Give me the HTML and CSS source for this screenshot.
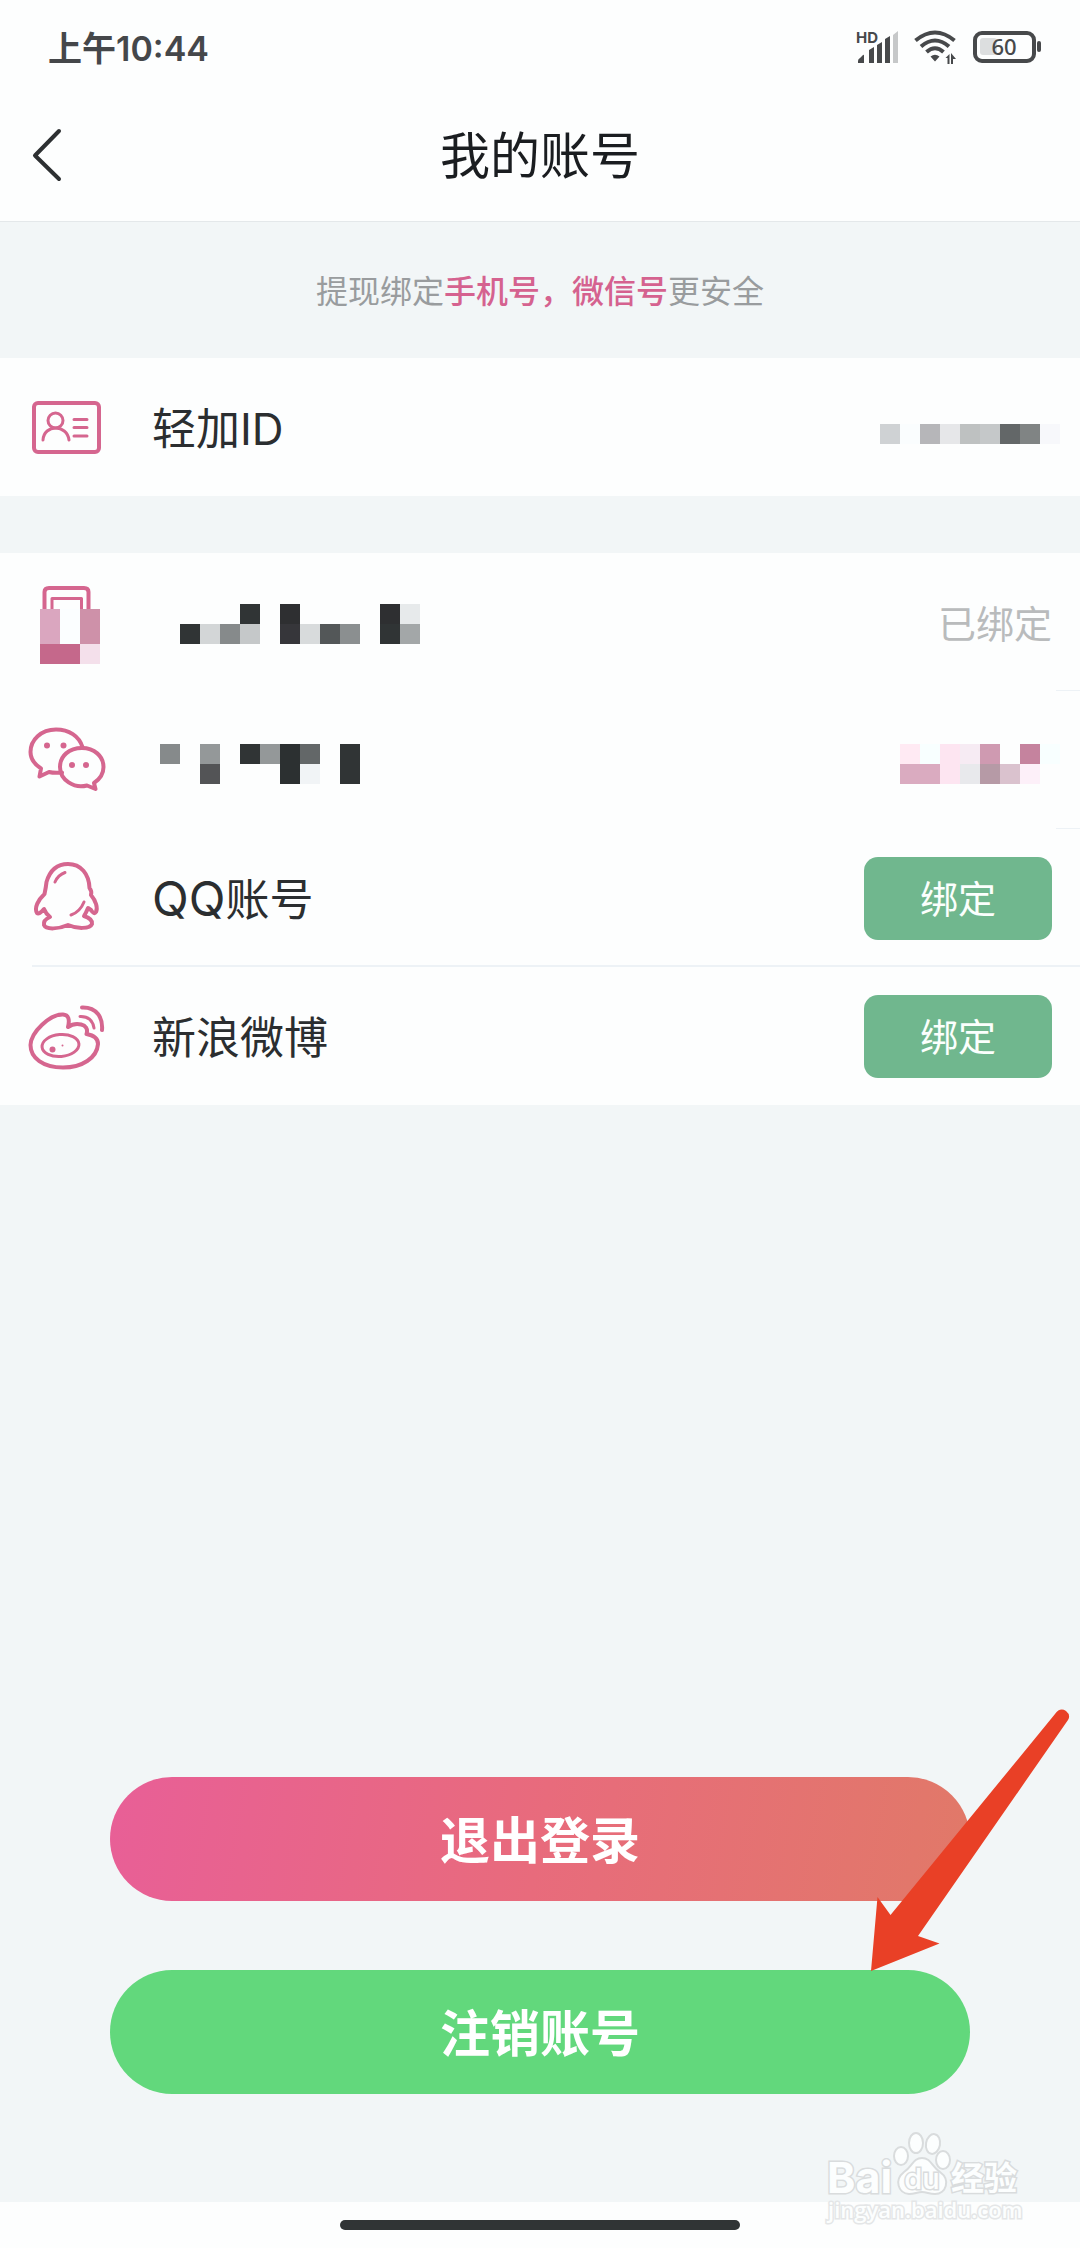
FILE: index.html
```html
<!DOCTYPE html>
<html lang="zh-CN">
<head>
<meta charset="utf-8">
<meta name="viewport" content="width=device-width, initial-scale=1">
<title>我的账号</title>
<link rel="stylesheet" href="styles.css">
</head>
<body>
<div class="status">
  <span class="time">上午10:44</span>
  <div class="status-icons">
    <svg class="signal" width="42" height="32" viewBox="0 0 42 32" aria-hidden="true">
      <text class="hd" x="0" y="12">HD</text>
      <path d="M2 32v-2q0-2 2-3l3-3q1-1 1 1v7zM13 32V19l5-3v16zM21 32V14l5-3v21zM29 32V8l5-3v27z"/>
      <path class="dim" d="M37 32V4l5-4v32z"/>
    </svg>
    <svg class="wifi" width="43" height="34" viewBox="0 0 43 34" aria-hidden="true">
      <g class="wifi-arcs">
        <path d="M1.500 10.500Q21 -5.500 40.500 10.500"/>
        <path d="M7 16.500Q21 4.500 35 16.500"/>
        <path d="M12.500 22Q21 14.500 29.500 22"/>
      </g>
      <path d="M16.500 26.500Q21 23 25.500 26.500L21 31.500zM31.500 28l4-4v10h-2v-6zM37 23l5 6h-3v5h-2z"/>
    </svg>
    <svg class="battery" width="68" height="32" viewBox="0 0 68 32" aria-hidden="true">
      <rect class="shell" x="2" y="2" width="59" height="28" rx="7"/>
      <rect class="level" x="7" y="7" width="17" height="17" rx="3"/>
      <rect x="64" y="10" width="4" height="11" rx="2"/>
      <text class="percent" x="31" y="24" text-anchor="middle">60</text>
    </svg>
  </div>
</div>

<header class="nav">
  <button class="back" type="button" aria-label="返回">
    <svg width="30" height="54" viewBox="0 0 30 54" aria-hidden="true"><path d="M27 3L3 27.500L27 51"/></svg>
  </button>
  <h1 class="title">我的账号</h1>
</header>

<main class="page">
  <p class="tip">提现绑定<em>手机号，微信号</em>更安全</p>

  <ul class="group">
    <li class="row">
      <svg class="icon" width="112" height="96" viewBox="0 0 112 96" aria-hidden="true">
        <rect class="thick" x="34" y="24" width="65" height="49" rx="4"/>
        <circle cx="55.500" cy="41.500" r="7.500"/>
        <path d="M43 61C44 45 67 45 69 61M74 40.500H87M74 48.500H87M74 57H87"/>
      </svg>
      <span class="label">轻加ID</span>
      <svg class="mask" width="172" height="34" viewBox="0 0 172 34" aria-hidden="true">
        <path fill="#cfd2d4" d="M0 14h20v20H0z"/><path fill="#fafdfe" d="M20 14h20v20H20z"/>
        <path fill="#b6b6b9" d="M40 14h20v20H40z"/><path fill="#e6e7e9" d="M60 14h20v20H60z"/>
        <path fill="#bec1c1" d="M80 14h20v20H80z"/><path fill="#c5c8c9" d="M100 14h20v20h-20z"/>
        <path fill="#636768" d="M120 14h20v20h-20z"/><path fill="#808484" d="M140 14h20v20h-20z"/>
        <path fill="#f7f8fb" d="M160 14h20v20h-20z"/>
      </svg>
    </li>
  </ul>

  <ul class="group">
    <li class="row">
      <svg class="icon" width="112" height="96" viewBox="0 0 112 96" aria-hidden="true">
        <path class="thick" d="M44.500 36V18Q44.500 14 49 14H84Q88.500 14 88.500 18V36"/>
        <path d="M52 36V24.500H81.500V36"/>
        <g class="cells">
          <path fill="#daa6bf" d="M40 35h20v35H40z"/><path fill="#fbfeff" d="M60 35h20v35H60z"/>
          <path fill="#ce91a9" d="M80 35h20v35H80z"/><path fill="#c5688b" d="M40 70h40v20H40z"/>
          <path fill="#f4e0eb" d="M80 70h20v20H80z"/>
        </g>
      </svg>
      <svg class="mask" width="268" height="44" viewBox="0 0 268 44" aria-hidden="true">
        <path fill="#303435" d="M88 4h20v20H88zM28 24h20v20H28zM228 24h20v20h-20z"/>
        <path fill="#2e2f31" d="M128 4h20v20h-20zM228 4h20v20h-20z"/>
        <path fill="#e7eaeb" d="M248 4h20v20h-20z"/>
        <path fill="#d3d6d7" d="M48 24h20v20H48z"/><path fill="#868a8b" d="M68 24h20v20H68z"/>
        <path fill="#c5c8c9" d="M88 24h20v20H88z"/><path fill="#36363a" d="M128 24h20v20h-20z"/>
        <path fill="#d8dbdc" d="M148 24h20v20h-20z"/><path fill="#535758" d="M168 24h20v20h-20z"/>
        <path fill="#8b8f90" d="M188 24h20v20h-20z"/><path fill="#a3a7a8" d="M248 24h20v20h-20z"/>
      </svg>
      <span class="state">已绑定</span>
    </li>
    <li class="row">
      <svg class="icon" width="112" height="96" viewBox="0 0 112 96" aria-hidden="true">
        <path class="thick" d="M82.500 35C79 24 69 17.500 56 17.500C41 17.500 30.500 28 30.500 40C30.500 47 34 52 41 56.500L39.500 64.500L49 60C53 61 57 61 62 60.500"/>
        <path class="thick" d="M82 36C94 36 103.500 44 103.500 55C103.500 62 100 67 94 71L95.500 77L87 73.500C74 77 60 68 60 55C60 44 69 36 82 36Z"/>
        <g class="solid"><circle cx="47" cy="33.500" r="3"/><circle cx="63.500" cy="33.500" r="3"/><circle cx="72" cy="53" r="3"/><circle cx="86" cy="53" r="3"/></g>
      </svg>
      <svg class="mask" width="268" height="50" viewBox="0 0 268 50" aria-hidden="true">
        <path fill="#868a8b" d="M8 9h20v20H8z"/>
        <path fill="#949899" d="M48 9h20v20H48zM108 9h20v20h-20z"/>
        <path fill="#303435" d="M88 9h20v20H88zM188 9h20v40h-20z"/>
        <path fill="#2c3031" d="M128 9h20v40h-20z"/>
        <path fill="#636768" d="M148 9h20v20h-20z"/>
        <path fill="#535456" d="M48 29h20v20H48z"/><path fill="#f1f4f6" d="M148 29h20v20h-20z"/>
      </svg>
      <svg class="mask" width="152" height="50" viewBox="0 0 152 50" aria-hidden="true">
        <path fill="#ffeaf3" d="M0 9h20v20H0z"/><path fill="#f8ffff" d="M20 9h20v20H20zM140 9h20v20h-20z"/>
        <path fill="#fde5f1" d="M40 9h20v40H40z"/><path fill="#f6ebf3" d="M60 9h20v20H60z"/>
        <path fill="#cf9ab1" d="M80 9h20v20H80z"/><path fill="#c5839e" d="M120 9h20v20h-20z"/>
        <path fill="#daabc0" d="M0 29h40v20H0z"/><path fill="#e8e9ec" d="M60 29h20v20H60z"/>
        <path fill="#b69aa6" d="M80 29h20v20H80z"/><path fill="#dac2ce" d="M100 29h20v20h-20z"/>
        <path fill="#fdf0f9" d="M120 29h20v20h-20z"/>
      </svg>
    </li>
    <li class="row row-ruled">
      <svg class="icon" width="112" height="96" viewBox="0 0 112 96" aria-hidden="true">
        <path class="thick" d="M68 14C81 14 89 24 89.500 38Q92 41 91 45C96 51 98 58 96 62Q94 65 91 60L88 58Q86 63 84 66Q93 69 92 74C90 79 77 79 68 75C59 79 46 80 44 75Q43 70 50 67Q46 64 44 59Q39 65 37 63C34 58 38 50 44.500 44Q46 37 46.500 32C50 20 57 14 68 14Z"/>
        <path d="M55 32Q58 25 65 22.500M84 52Q80 62 71 65"/>
      </svg>
      <span class="label"><span class="brand">QQ</span>账号</span>
      <button class="bind" type="button">绑定</button>
    </li>
    <li class="row">
      <svg class="icon" width="112" height="96" viewBox="0 0 112 96" aria-hidden="true">
        <path class="thick" d="M63 26.500Q71 27 68 39C75 34 90 35 86.500 46Q98 48 98 56C97 70 82 79.500 63 79.500C43 79.500 30.500 70 30.500 57C31 44 50 26 63 26.500Z"/>
        <ellipse cx="60.500" cy="57.500" rx="18.500" ry="11" transform="rotate(-5 60.500 57.500)"/>
        <path class="thick" d="M82 19.500C97 19 103 30 102 42"/>
        <path d="M80 28.500Q92 28 94 40"/>
        <g class="solid"><circle cx="52.500" cy="61.500" r="3"/><circle cx="62.500" cy="57.500" r="1"/></g>
      </svg>
      <span class="label">新浪微博</span>
      <button class="bind" type="button">绑定</button>
    </li>
  </ul>

  <div class="actions">
    <button class="pill pill-logout" type="button">退出登录</button>
    <button class="pill pill-close" type="button">注销账号</button>
    <svg class="pointer" width="220" height="300" viewBox="0 0 220 300" aria-hidden="true">
      <path d="M11 281L17.500 207L30.500 225L195 24Q200 17 206 21Q211 25 208 30L58 246L79.500 253.500Z"/>
    </svg>
  </div>

  <svg class="watermark" width="220" height="128" viewBox="0 0 220 128" aria-hidden="true">
    <text class="wm-bai" x="17" y="83">Bai</text>
    <ellipse cx="91" cy="46" rx="7" ry="9"/><ellipse cx="106" cy="33" rx="7" ry="10"/>
    <ellipse cx="123" cy="34" rx="7" ry="10" transform="rotate(10 123 34)"/><ellipse cx="133" cy="50" rx="7" ry="9"/>
    <path d="M112 48C121 48 122 57 130 62C141 70 136 84 125 84C119 84 117 82 112 82C107 82 105 84 99 84C88 83 84 70 94 62C102 57 103 48 112 48Z"/>
    <text class="wm-du" x="112" y="79" text-anchor="middle">du</text>
    <text class="wm-cn" x="141" y="80">经验</text>
    <text class="wm-url" x="18" y="108">jingyan.baidu.com</text>
  </svg>
</main>

<footer class="home"><span class="home-bar"></span></footer>
</body>
</html>
```
FILE: styles.css
```css
* {
  box-sizing: border-box;
}

body {
  margin: 0;
  min-height: 100vh;
  display: flex;
  flex-direction: column;
  background: #fdfefe;
  color: #2b2e30;
  font-family: Inter, "Noto Sans CJK SC", sans-serif;
}

button {
  border: 0;
  padding: 0;
  font-family: inherit;
}

svg {
  display: block;
  flex: none;
}

.status {
  height: 94px;
  padding: 0 39px 0 48px;
  display: flex;
  align-items: center;
  justify-content: space-between;
  color: #45474a;
}

.time {
  padding-bottom: 2px;
  font-size: 34px;
  font-weight: 600;
}

.status-icons {
  display: flex;
  align-items: center;
  gap: 16px;
  fill: #47494b;
}

.signal {
  overflow: visible;
}

.hd {
  font-size: 15px;
  font-weight: 700;
}

.dim {
  fill: #c6c8c9;
}

.wifi-arcs {
  fill: none;
  stroke: #47494b;
  stroke-width: 4;
}

.shell {
  fill: none;
  stroke: #47494b;
  stroke-width: 4;
}

.level {
  fill: #dcdedf;
}

.percent {
  font-family: "Noto Sans", sans-serif;
  font-size: 22px;
  font-weight: 500;
}

.nav {
  height: 128px;
  padding-bottom: 5px;
  border-bottom: 1px solid #e4e8ea;
  display: grid;
  grid-template-columns: 120px 1fr 120px;
  align-items: center;
}

.back {
  height: 100px;
  padding-left: 32px;
  background: none;
}

.back path {
  fill: none;
  stroke: #2d3032;
  stroke-width: 4;
  stroke-linecap: round;
  stroke-linejoin: round;
}

.title {
  margin: 0;
  padding-bottom: 6px;
  text-align: center;
  font-size: 50px;
  font-weight: 400;
  color: #1a1d20;
}

.page {
  position: relative;
  flex: 1;
  display: flex;
  flex-direction: column;
  background: #f2f6f7;
}

.tip {
  margin: 0;
  height: 136px;
  line-height: 140px;
  text-align: center;
  font-size: 32px;
  color: #999c9e;
}

.tip em {
  font-style: normal;
  font-weight: 500;
  color: #d5628f;
}

.group {
  margin: 0;
  padding: 0;
  list-style: none;
  background: #fdfefe;
}

.group + .group {
  margin-top: 57px;
}

.row {
  height: 138px;
  padding-right: 28px;
  display: grid;
  grid-template-columns: 152px 1fr auto;
  align-items: center;
}

.group .row:not(:last-child) {
  background: linear-gradient(#edf2f6, #edf2f6) right bottom / 24px 1px no-repeat;
}

.group .row-ruled:not(:last-child) {
  background-size: calc(100% - 32px) 2px;
}

.icon {
  fill: none;
  stroke: #d5668f;
  stroke-width: 3;
  stroke-linecap: round;
  stroke-linejoin: round;
}

.thick {
  stroke-width: 4;
}

.solid {
  fill: #d5668f;
  stroke: none;
}

.cells {
  stroke: none;
}

.mask {
  overflow: visible;
}

.label {
  padding-bottom: 2px;
  font-size: 44px;
}

.brand {
  font-size: 48px;
}

.state {
  padding-bottom: 2px;
  font-size: 38px;
  color: #b9bbbc;
}

.bind {
  width: 188px;
  height: 83px;
  padding-bottom: 4px;
  border-radius: 14px;
  background: #70b78e;
  color: #fbfffd;
  font-size: 38px;
}

.actions {
  position: relative;
  margin-top: auto;
  padding: 0 110px 108px;
  display: grid;
  gap: 69px;
}

.pill {
  height: 124px;
  padding-bottom: 4px;
  border-radius: 62px;
  color: #fff;
  font-size: 50px;
  font-weight: 700;
}

.pill-logout {
  background: linear-gradient(100deg, #e85f97, #e86b7c 50%, #e17968);
}

.pill-close {
  background: #62d87c;
}

.pointer {
  position: absolute;
  top: -87px;
  right: 0;
  fill: #e94026;
}

.watermark {
  position: absolute;
  right: 50px;
  bottom: -36px;
  fill: #fcfefe;
  stroke: #d9dcdd;
  stroke-width: 2;
}

.watermark text {
  paint-order: stroke;
  stroke-width: 3;
}

.wm-bai {
  font-size: 43px;
  font-weight: 700;
}

.wm-du {
  font-size: 29px;
  font-weight: 500;
}

.wm-cn {
  font-size: 33px;
  font-weight: 700;
}

.watermark .wm-url {
  font-family: "Open Sans", sans-serif;
  font-size: 22px;
  font-weight: 600;
  stroke: #e4e6e7;
}

.home {
  height: 46px;
  display: flex;
  align-items: center;
  justify-content: center;
}

.home-bar {
  width: 37%;
  height: 10px;
  border-radius: 5px;
  background: #303435;
}
```
